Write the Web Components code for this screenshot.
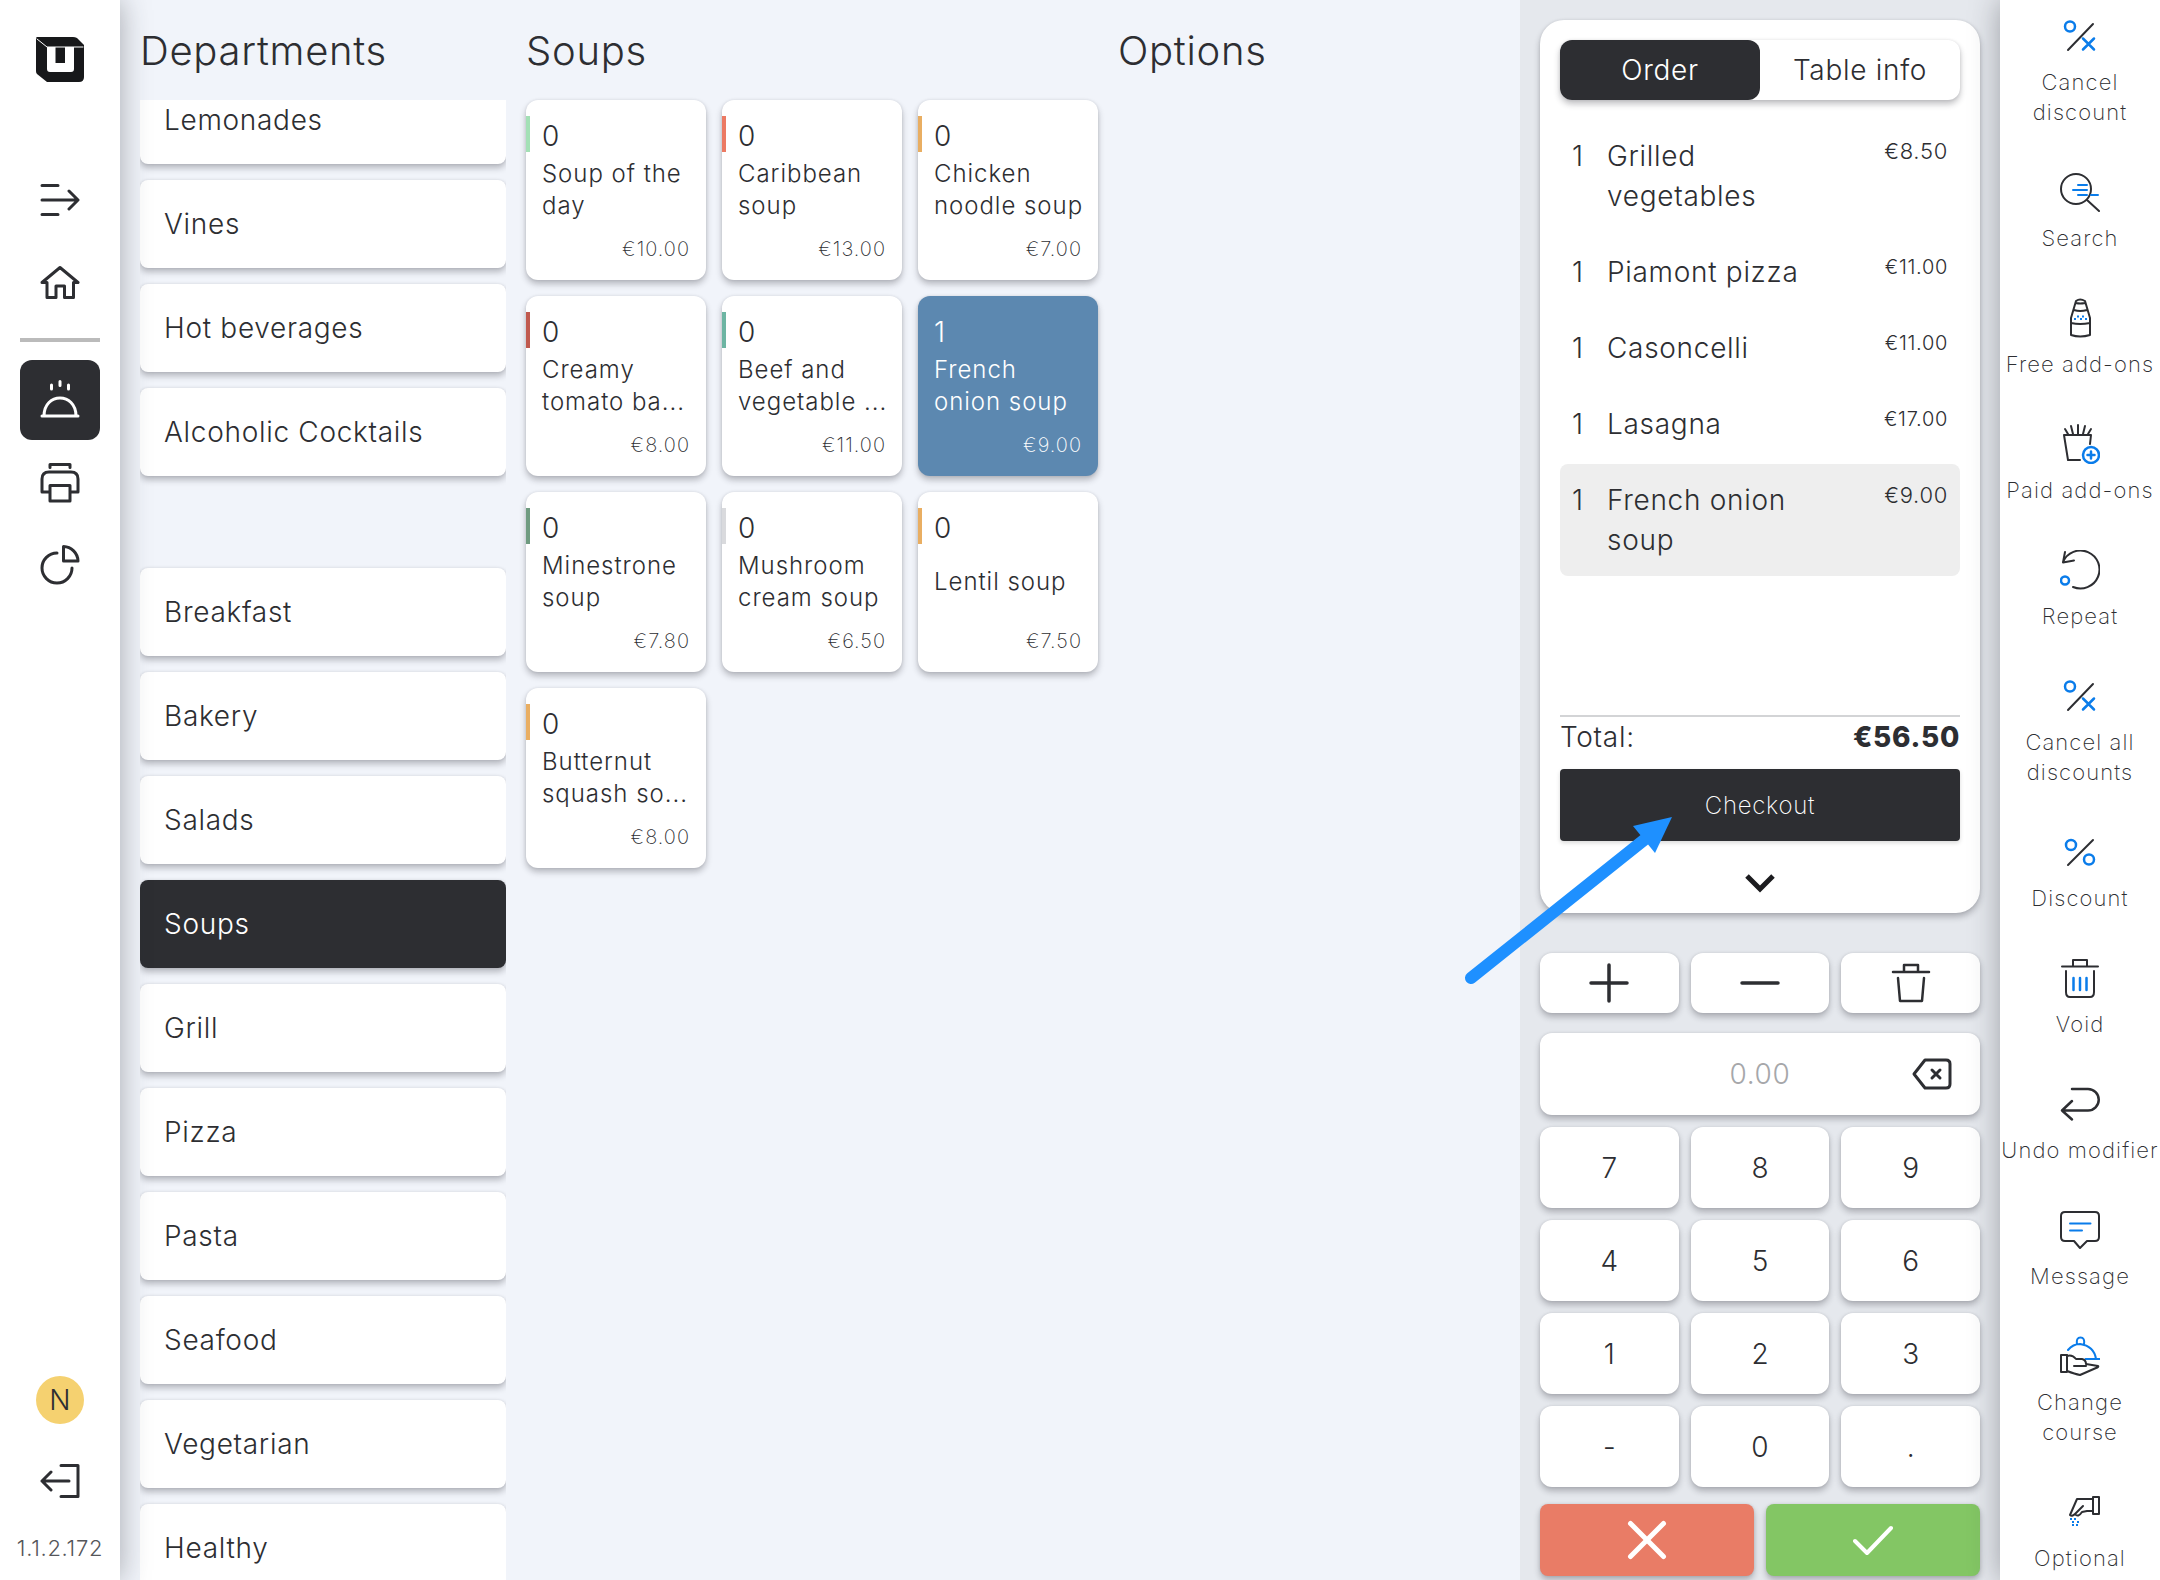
<!DOCTYPE html>
<html lang="en">
<head>
<meta charset="utf-8">
<title>Point of sale</title>
<style>
  html, body { height: 100%; margin: 0; }
  body {
    --ink: #2d2e32;
    --accent: #0a7cea;
    --shadow: 0 4px 6px rgba(30, 30, 40, .28), 0 0 3px rgba(30, 30, 40, .1);
    overflow: hidden;
    background: #f1f4fa;
    color: var(--ink);
    font-family: Inter, "Liberation Sans", sans-serif;
    font-weight: 300;
    font-size: 28px;
    letter-spacing: 0.025em;
  }
</style>
</head>
<body>
<pos-app></pos-app>
<script>
const svg = (w, h, body, extra = '') =>
  `<svg width="${w}" height="${h}" viewBox="0 0 ${w} ${h}" fill="none" stroke="currentColor" stroke-width="3" stroke-linecap="round" stroke-linejoin="round" aria-hidden="true" ${extra}>${body}</svg>`;

const B = 'stroke="#0a7cea"';
const ICONS = {
  logo: svg(48, 46, `<path fill="#17181a" stroke="none" d="M1 0H37Q39 0 41 1L48 8V40Q48 45 43 45H11L1 37Q0 36 0 34V2Q0 0 1 0Z"/><path d="M1 2L11 10H47" stroke="#fff" stroke-width="1"/><path fill="#fff" stroke="none" d="M11 10H19.500V26H29V10H38V32Q38 35 35 35H14Q11 35 11 32Z"/>`),
  menu: svg(40, 40, '<path d="M2 5.500H18M2 20H37M2 34.500H18M29 11L38 20L29 29"/>'),
  home: svg(40, 40, '<path d="M2 19.500L20 4.500L38 19.500H33.500V34.500H24.500V23H16V34.500H7V19.500Z"/>'),
  dish: svg(40, 40, '<path d="M2 36H38M4 36C4 12 36 12 36 36M11.500 5V9M20 1.500V5.500M28.500 5V9"/>'),
  print: svg(40, 40, '<path d="M10 4.500V1.500H30V4.500M10 29H2V16Q2 9 9 9H31Q38 9 38 16V29H30M10 22.500H30V38H10Z"/>'),
  pie: svg(40, 40, '<path d="M17 8A15 15 0 1 0 32 23M23.500 1.500A15 15 0 0 1 38 16H23.500Z"/>'),
  exit: svg(40, 40, '<path d="M21 4.500H38V35.500H21M29 20H2M11 11L2 20L11 29"/>'),
  plus: svg(40, 40, '<path stroke-width="3.500" d="M2 20H38M20 2V38"/>'),
  minus: svg(40, 40, '<path stroke-width="3.500" d="M2 20H38"/>'),
  trash: svg(40, 40, '<path stroke-width="2.500" d="M2 9H38M13 8V2H27V8M7 15L9 38H31L33 15"/>'),
  back: svg(40, 32, '<path d="M13 2H34Q38 2 38 6V26Q38 30 34 30H13L2 16ZM20 12L28 20M28 12L20 20"/>'),
  close: svg(40, 40, '<path stroke-width="5" d="M3.500 3.500L36.500 36.500M36.500 3.500L3.500 36.500"/>'),
  check: svg(40, 40, '<path stroke-width="4" d="M2 21L14 33L38 8"/>'),
  down: svg(32, 20, '<path stroke-width="5" stroke-linecap="butt" stroke-linejoin="miter" d="M3 3L16 16L29 3"/>'),
  cancel: svg(40, 40, `<path stroke-width="2" d="M8 34L33 8"/><circle cx="10" cy="10.500" r="5" ${B} stroke-width="2.500"/><path ${B} stroke-width="2.500" d="M23 22.500L34 33.500M34 22.500L23 33.500"/>`),
  percent: svg(40, 40, `<path stroke-width="2" d="M8 33L33 8"/><circle cx="11" cy="13" r="5" ${B} stroke-width="2.500"/><circle cx="29" cy="27.500" r="5" ${B} stroke-width="2.500"/>`),
  search: svg(40, 40, `<path stroke-width="2" d="M27 28L39 39"/><circle cx="16" cy="17" r="15" stroke-width="2"/><path ${B} stroke-width="2" d="M18 13H27M13 18H27M18 23H27M31 23H38"/>`),
  shaker: svg(40, 40, `<path stroke-width="2" d="M16 3Q20 0 25 3L30 20V37Q20 40 11 37V20ZM14 12Q20 14 27 12M11 25Q20 27 30 25M16 5Q20 6 25 5"/><path ${B} stroke-width="2" stroke-linecap="butt" d="M14 21h2M17 18.500h2M20 21h2M22 18.500h2M25 21h2"/>`),
  fries: svg(40, 40, `<path stroke-width="2" d="M20 36H8L4 11H31L30 20M8 10L5 5M13 10L11 2M18 10V1M23 10L25 2M28 10L31 5"/><circle cx="31" cy="31" r="8" ${B} stroke-width="2.500"/><path ${B} stroke-width="2.500" d="M27.500 31H34.500M31 27.500V34.500"/>`),
  repeat: svg(40, 40, `<path stroke-width="2" d="M13 37A19 19 0 1 0 3 12M5 2L3 12.500L14 10.500"/><circle cx="5" cy="30.500" r="4" ${B} stroke-width="2.500"/>`),
  void: svg(40, 40, `<path stroke-width="2" d="M2 8.500H38M13 8V2H27V8M6 13V34Q6 39 10 39H30Q34 39 34 34V13"/><path ${B} stroke-width="2.500" d="M13.500 20V32M20 20V32M26.500 20V32"/>`),
  undo: svg(40, 40, '<path stroke-width="2.500" d="M12 5H28A10 10 0 0 1 28 26.500H2M12 17L2 26.500L12 35.500"/>'),
  message: svg(40, 40, `<path stroke-width="2" d="M5 2H35Q39 2 39 6V27Q39 31 35 31H27L20 38L14 31H5Q1 31 1 27V6Q1 2 5 2Z"/><path ${B} stroke-width="2" d="M10 13.500H30.500M10 20.500H22"/>`),
  course: svg(40, 40, `<path ${B} stroke-width="2" d="M8 14Q13 8 20 8Q34 10 36 23M25.500 23H40M17 8Q16 1.500 20.500 1.500Q25 1.500 24 8"/><path stroke-width="2" d="M1 19H7V36H1ZM7 20Q12 18 16 23H22Q26 24 26 28L38 30Q39 31 36 32L20 39Q15 38 7 35M14 30H26"/>`),
  pinch: svg(40, 40, `<path stroke-width="2" d="M33 5H39V22H33ZM33 7H17L10 23Q12 25 15 22L23 14M15 22Q18 26 22 20L27 19H33"/><path ${B} stroke-width="2" stroke-linecap="butt" d="M10 27h2M14 27h2M12 30h2M17 30h2M12 33h2M16 33h2"/>`)
};

class Base extends HTMLElement {
  connectedCallback() {
    if (this.shadowRoot) return;
    this.attachShadow({ mode: 'open' }).innerHTML =
      `<style>*{box-sizing:border-box} svg{display:block;flex:none} button,input{font:inherit;letter-spacing:inherit;color:inherit;border:0;background:none;margin:0;padding:0} button{cursor:pointer} h2,p,ul{margin:0;padding:0;font:inherit;list-style:none} ${this.css()}</style>${this.html()}`;
    this.ready?.();
  }
  a(name) { return this.getAttribute(name) ?? ''; }
}

customElements.define('pos-icon', class extends Base {
  css() { return ':host{display:block;flex:none}'; }
  html() { return ICONS[this.a('name')]; }
});

customElements.define('nav-rail', class extends Base {
  css() { return `
    :host{display:block;background:#fff;box-shadow:0 0 28px rgba(40,42,50,.38);z-index:2}
    nav{height:100%;display:flex;flex-direction:column;align-items:center;padding:37px 0 16px}
    button{width:80px;height:80px;display:grid;place-items:center;border-radius:12px}
    .logo{height:46px}
    .menu{margin-top:77px} .home{margin-top:3px}
    hr{width:80px;height:4px;border:0;background:#bbb;margin:15px 0 18px}
    .on{background:var(--ink);color:#fff}
    .print{margin-top:3px} .pie{margin-top:2px}
    .avatar{margin-top:auto;width:48px;height:48px;border-radius:50%;background:#f5d170;letter-spacing:0}
    .exit{margin:17px 0 11px}
    .version{font-size:22px;line-height:32px;color:#55565a}`; }
  html() {
    const b = (n, label, cls = n) => `<button class="${cls}" aria-label="${label}"><pos-icon name="${n}"></pos-icon></button>`;
    return `<nav><pos-icon class="logo" name="logo"></pos-icon>${b('menu', 'Expand menu')}${b('home', 'Home')}<hr>${b('dish', 'Orders', 'on')}${b('print', 'Print')}${b('pie', 'Reports')}<button class="avatar">N</button>${b('exit', 'Log out')}<p class="version">1.1.2.172</p></nav>`;
  }
});

customElements.define('column-panel', class extends Base {
  css() { return `
    :host{display:flex;flex-direction:column;min-height:0;min-width:0}
    h2{font-size:40px;line-height:48px;padding:27px 0 25px;flex:none}
    .body{flex:1;min-height:0}`; }
  html() { return `<h2>${this.a('heading')}</h2><div class="body"><slot></slot></div>`; }
});

customElements.define('department-list', class extends Base {
  css() { return `
    :host{display:block;height:100%;overflow:auto;scrollbar-width:none}
    ul{display:flex;flex-direction:column;gap:16px;padding-bottom:40px}
    li.gap{height:60px}
    button{width:100%;height:88px;padding:0 24px;border-radius:8px;background:#fff;box-shadow:var(--shadow);text-align:left;display:block}
    button[aria-pressed=true]{background:var(--ink);color:#fff}`; }
  html() {
    const names = ['Lemonades', 'Vines', 'Hot beverages', 'Alcoholic Cocktails', '', 'Breakfast', 'Bakery', 'Salads', 'Soups', 'Grill', 'Pizza', 'Pasta', 'Seafood', 'Vegetarian', 'Healthy'];
    return `<ul>${names.map(n => n ? `<li><button aria-pressed="${n === 'Soups'}">${n}</button></li>` : '<li class="gap"></li>').join('')}</ul>`;
  }
  ready() { this.scrollTop = 24; }
});

customElements.define('product-card', class extends Base {
  css() { return `
    :host{display:block}
    button{position:relative;width:100%;height:180px;padding:18px 12px 19px 16px;border-radius:12px;background:#fff;box-shadow:var(--shadow);display:flex;flex-direction:column;text-align:left;overflow:hidden}
    button::before{content:"";position:absolute;left:0;top:16px;width:4px;height:36px;background:var(--tag)}
    .qty{line-height:36px}
    .name{height:64px;margin-top:4px;display:flex;align-items:center;font-size:24px;line-height:32px;letter-spacing:0.04em}
    .price{margin:auto 4px 0 0;align-self:flex-end;font-size:20px;line-height:24px;font-weight:200;letter-spacing:0.05em}
    :host([selected]) button{background:#5c88b0;color:#fff}
    :host([selected]) button::before{content:none}`; }
  html() { return `<button style="--tag:${this.a('tag')}"><span class="qty">${this.a('qty')}</span><span class="name"><span><slot></slot></span></span><span class="price">${this.a('price')}</span></button>`; }
});

customElements.define('product-grid', class extends Base {
  css() { return ':host{display:grid;grid-template-columns:repeat(3,180px);gap:16px}'; }
  html() {
    return [
      ['Soup of the day', '€10.00', '#a3e0b5'], ['Caribbean soup', '€13.00', '#ec7a63'], ['Chicken noodle soup', '€7.00', '#e9ae62'],
      ['Creamy tomato ba...', '€8.00', '#c0594d'], ['Beef and vegetable&nbsp;...', '€11.00', '#6db5a3'], ['French onion soup', '€9.00', '', 1],
      ['Minestrone soup', '€7.80', '#6f9b80'], ['Mushroom cream soup', '€6.50', '#d9dadd'], ['Lentil soup', '€7.50', '#e9ae62'],
      ['Butternut squash so...', '€8.00', '#e9ae62']
    ].map(([n, p, c, q]) => `<product-card qty="${q || 0}" price="${p}" tag="${c}" ${q ? 'selected' : ''}>${n}</product-card>`).join('');
  }
});

customElements.define('order-line', class extends Base {
  css() { return `
    :host{display:grid;grid-template-columns:35px 1fr 120px;padding:16px 12px;border-radius:8px;line-height:40px}
    :host([selected]){background:#eee}
    .price{text-align:right;font-size:22px;line-height:30px}
    .price.long{font-size:20px}`; }
  html() { const p = this.a('price'); return `<span>1</span><span><slot></slot></span><span class="price ${p.length > 5 ? 'long' : ''}">${p}</span>`; }
});

customElements.define('order-card', class extends Base {
  css() { return `
    :host{display:flex;flex-direction:column;background:#fff;border-radius:24px;padding:20px 20px 0;box-shadow:var(--shadow)}
    .tabs{display:grid;grid-template-columns:1fr 1fr;height:60px;flex:none;border-radius:12px;box-shadow:var(--shadow)}
    .tabs button{border-radius:12px}
    .tabs [aria-selected=true]{background:var(--ink);color:#fff}
    .lines{flex:1;min-height:0;display:flex;flex-direction:column;gap:4px;padding-top:20px}
    .total{display:flex;justify-content:space-between;border-top:2px solid #d3d4d6;line-height:40px;padding-bottom:12px}
    b{font-weight:800}
    .checkout{height:72px;flex:none;border-radius:4px;background:var(--ink);color:#fff;font-size:24px;font-weight:200;box-shadow:0 2px 4px rgba(0,0,0,.15)}
    .more{height:72px;flex:none;display:grid;place-items:center;color:#1c1c1f;padding-top:12px}`; }
  html() { return `
    <div class="tabs" role="tablist"><button role="tab" aria-selected="true">Order</button><button role="tab" aria-selected="false">Table info</button></div>
    <div class="lines">
      <order-line price="€8.50">Grilled vegetables</order-line>
      <order-line price="€11.00">Piamont pizza</order-line>
      <order-line price="€11.00">Casoncelli</order-line>
      <order-line price="€17.00">Lasagna</order-line>
      <order-line price="€9.00" selected>French onion soup</order-line>
    </div>
    <div class="total"><span>Total:</span><b>€56.50</b></div>
    <button class="checkout">Checkout</button>
    <button class="more" aria-label="Show more"><pos-icon name="down"></pos-icon></button>`; }
});

customElements.define('key-pad', class extends Base {
  css() { return `
    :host{display:flex;flex-direction:column}
    button,.entry{background:#fff;border-radius:12px;box-shadow:var(--shadow);display:grid;place-items:center}
    .three{display:grid;grid-template-columns:repeat(3,1fr);gap:12px}
    .tools button{height:60px}
    .entry{height:82px;margin:20px 0 12px;display:flex;position:relative}
    .entry input{width:100%;height:100%;text-align:center;outline:0}
    .entry input::placeholder{color:#a6a7aa;opacity:1}
    .entry button{position:absolute;right:20px;top:0;height:100%;padding:0 8px;box-shadow:none;background:none}
    .keys button{height:81px;letter-spacing:0}
    .two{display:grid;grid-template-columns:1fr 1fr;gap:12px;margin-top:17px}
    .two button{height:72px;border-radius:8px;color:#fff}
    .two .no{background:#e97c66} .two .yes{background:#83c664}`; }
  html() {
    const b = (n, l) => `<button aria-label="${l}"><pos-icon name="${n}"></pos-icon></button>`;
    return `<div class="three tools">${b('plus', 'Add one')}${b('minus', 'Remove one')}${b('trash', 'Delete')}</div>
    <div class="entry"><input aria-label="Amount" placeholder="0.00">${b('back', 'Backspace')}</div>
    <div class="three keys">${[...'789456123-0.'].map(k => `<button>${k}</button>`).join('')}</div>
    <div class="two"><button class="no" aria-label="Cancel"><pos-icon name="close"></pos-icon></button><button class="yes" aria-label="Confirm"><pos-icon name="check"></pos-icon></button></div>`;
  }
});

customElements.define('action-rail', class extends Base {
  css() { return `
    :host{display:block;background:#fff;box-shadow:0 0 28px rgba(40,42,50,.38);overflow:hidden;z-index:2}
    nav{display:flex;flex-direction:column;align-items:stretch;gap:45px;padding-top:16px}
    button{display:flex;flex-direction:column;align-items:center;gap:11px;flex:none;font-size:22px;line-height:30px;font-weight:200;letter-spacing:0.05em;white-space:nowrap}`; }
  html() {
    return `<nav>${[
      ['cancel', 'Cancel<br>discount'], ['search', 'Search'], ['shaker', 'Free add-ons'], ['fries', 'Paid add-ons'], ['repeat', 'Repeat'],
      ['cancel', 'Cancel all<br>discounts'], ['percent', 'Discount'], ['void', 'Void'], ['undo', 'Undo modifier'], ['message', 'Message'],
      ['course', 'Change<br>course'], ['pinch', 'Optional']
    ].map(([i, t]) => `<button><pos-icon name="${i}"></pos-icon><span>${t}</span></button>`).join('')}</nav>`;
  }
});

customElements.define('pointer-arrow', class extends Base {
  css() { return ':host{position:absolute;right:484px;top:813px;z-index:3;pointer-events:none}'; }
  html() { return svg(216, 176, '<path stroke="#1e90ff" stroke-width="12" d="M11 165L184 27"/><path fill="#1e90ff" stroke="none" d="M212 4L173 13L195 40Z"/>'); }
});

customElements.define('pos-app', class extends Base {
  css() { return `
    :host{position:relative;display:grid;grid-template-columns:120px 1fr 480px 160px;height:100vh;overflow:hidden}
    main{display:grid;grid-template-columns:366px 572px 1fr;gap:20px;padding:0 20px;min-height:0;min-width:0}
    .side{background:#e5e8ed;padding:20px 20px 4px;display:flex;flex-direction:column;gap:40px;min-height:0}
    order-card{flex:1;min-height:0}`; }
  html() { return `
    <nav-rail></nav-rail>
    <main>
      <column-panel heading="Departments"><department-list></department-list></column-panel>
      <column-panel heading="Soups"><product-grid></product-grid></column-panel>
      <column-panel heading="Options"></column-panel>
    </main>
    <section class="side"><order-card></order-card><key-pad></key-pad></section>
    <action-rail></action-rail>
    <pointer-arrow></pointer-arrow>`; }
});
</script>
</body>
</html>
